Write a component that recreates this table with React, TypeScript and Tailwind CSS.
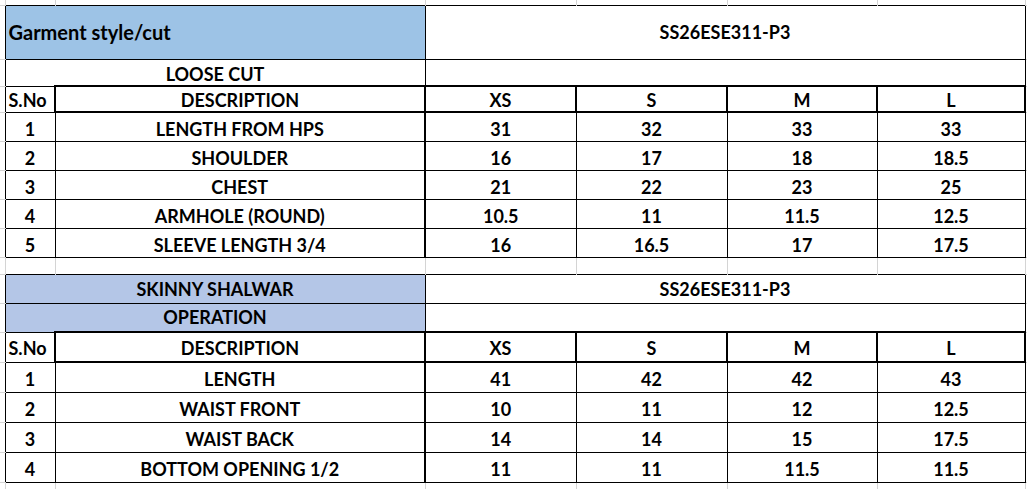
import React from "react";

const GRID = "border-[#d4d4d4]";

const looseCut = [
  ["1", "LENGTH FROM HPS", "31", "32", "33", "33"],
  ["2", "SHOULDER", "16", "17", "18", "18.5"],
  ["3", "CHEST", "21", "22", "23", "25"],
  ["4", "ARMHOLE (ROUND)", "10.5", "11", "11.5", "12.5"],
  ["5", "SLEEVE LENGTH 3/4", "16", "16.5", "17", "17.5"],
];

const shalwar = [
  ["1", "LENGTH", "41", "42", "42", "43"],
  ["2", "WAIST FRONT", "10", "11", "12", "12.5"],
  ["3", "WAIST BACK", "14", "14", "15", "17.5"],
  ["4", "BOTTOM OPENING 1/2", "11", "11", "11.5", "11.5"],
];

// excel gridline cells around the sheet
const LeftPad = () => <td className={"border-b p-0 " + GRID} />;
const RightPad = () => <td className={"border-b p-0 " + GRID} />;

const FillerRow = ({ h }: { h: string }) => (
  <tr className={h}>
    <td className={"border-r border-b p-0 " + GRID} />
    <td className={"border-r p-0 " + GRID} />
    <td className={"border-r p-0 " + GRID} />
    <td className={"border-r p-0 " + GRID} />
    <td className={"border-r p-0 " + GRID} />
    <td className={"border-r p-0 " + GRID} />
    <td className={"border-r p-0 " + GRID} />
    <td className={"border-b p-0 " + GRID} />
  </tr>
);

const HeaderRow = ({ h }: { h: string }) => (
  <tr className={h}>
    <LeftPad />
    <td className="border border-black border-r-2 px-[3px] pt-[2px] text-left">S.No</td>
    <td className="border-2 border-black pt-[2px]">DESCRIPTION</td>
    <td className="border-2 border-black pt-[2px]">XS</td>
    <td className="border-2 border-black pt-[2px]">S</td>
    <td className="border-2 border-black pt-[2px]">M</td>
    <td className="border-2 border-black pt-[2px]">L</td>
    <RightPad />
  </tr>
);

const DataRows = ({ rows, h, pb }: { rows: string[][]; h: string; pb: string }) => (
  <>
    {rows.map((r) => (
      <tr key={r[0]} className={h}>
        <LeftPad />
        <td className={"border border-black align-bottom " + pb}>{r[0]}</td>
        <td className={"border border-black border-r-2 align-bottom " + pb}>{r[1]}</td>
        <td className={"border border-black align-bottom " + pb}>{r[2]}</td>
        <td className={"border border-black align-bottom " + pb}>{r[3]}</td>
        <td className={"border border-black align-bottom " + pb}>{r[4]}</td>
        <td className={"border border-black align-bottom " + pb}>{r[5]}</td>
        <RightPad />
      </tr>
    ))}
  </>
);

export default function App() {
  return (
    <div className="w-[1027px] h-[489px] overflow-hidden bg-white">
      <table className="w-[1027px] table-fixed border-collapse text-center align-middle font-['Lato',sans-serif] text-[18px] leading-[20px] font-bold text-black">
        <colgroup>
          <col className="w-[5px]" />
          <col className="w-[50px]" />
          <col className="w-[370px]" />
          <col className="w-[151px]" />
          <col className="w-[151px]" />
          <col className="w-[150px]" />
          <col className="w-[148px]" />
          <col className="w-[2px]" />
        </colgroup>
        <tbody>
          <FillerRow h="h-[5px]" />

          {/* loose cut */}
          <tr className="h-[54px]">
            <LeftPad />
            <td colSpan={2} className="border border-black bg-[#9dc3e6] px-[3px] text-left text-[20px]">
              Garment style/cut
            </td>
            <td colSpan={4} className="border border-black">
              SS26ESE311-P3
            </td>
            <RightPad />
          </tr>
          <tr className="h-[27px]">
            <LeftPad />
            <td colSpan={2} className="border border-black pt-[3px]">
              LOOSE CUT
            </td>
            <td colSpan={4} className="border border-black" />
            <RightPad />
          </tr>
          <HeaderRow h="h-[26px]" />
          <DataRows rows={looseCut} h="h-[29px]" pb="pb-[2px]" />

          {/* gap between the two blocks */}
          <tr className="h-[17px]">
            <td className={"border-b p-0 " + GRID} />
            <td className={"border-x p-0 " + GRID} />
            <td className={"border-r p-0 " + GRID} />
            <td className={"border-r p-0 " + GRID} />
            <td className={"border-r p-0 " + GRID} />
            <td className={"border-r p-0 " + GRID} />
            <td className={"border-r p-0 " + GRID} />
            <td className={"border-b p-0 " + GRID} />
          </tr>

          {/* skinny shalwar */}
          <tr className="h-[29px]">
            <LeftPad />
            <td colSpan={2} className="border border-black bg-[#b4c6e7]">
              SKINNY SHALWAR
            </td>
            <td colSpan={4} className="border border-black">
              SS26ESE311-P3
            </td>
            <RightPad />
          </tr>
          <tr className="h-[29px]">
            <LeftPad />
            <td colSpan={2} className="border border-black bg-[#b4c6e7]">
              OPERATION
            </td>
            <td colSpan={4} className="border border-black" />
            <RightPad />
          </tr>
          <HeaderRow h="h-[30px]" />
          <DataRows rows={shalwar} h="h-[30px]" pb="pb-[3px]" />

          <FillerRow h="h-[8px]" />
        </tbody>
      </table>
    </div>
  );
}
